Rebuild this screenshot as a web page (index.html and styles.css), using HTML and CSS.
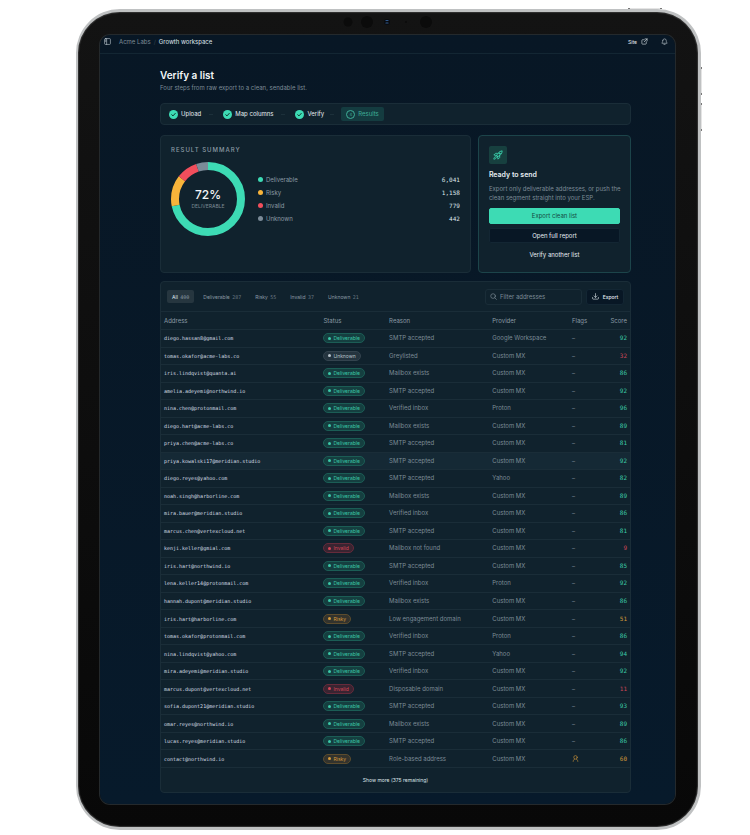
FILE: index.html
```html
<!DOCTYPE html>
<html lang="en">
<head>
    <meta charset="UTF-8">
    <meta name="viewport" content="width=device-width, initial-scale=1.0">
    <title>Verify a list</title>
    <link rel="stylesheet" href="styles.css">
</head>
<body>
    <div class="device">
        <span class="side-button power"></span>
        <span class="side-button volume-up"></span>
        <span class="side-button volume-down"></span>
        <div class="camera-bar">
            <svg width="92" height="14" viewBox="0 0 92 14">
                <circle cx="5" cy="7" r="4.5" fill="#0b0b0b"/>
                <circle cx="24" cy="7" r="6" fill="#0b0b0b"/>
                <circle cx="44" cy="7" r="3" fill="#090c10"/>
                <path d="M43 5.5h2M43 8h2" stroke="#31588c" stroke-width="1.2"/>
                <circle cx="63" cy="7" r="1" fill="#0b0b0b"/>
                <circle cx="83" cy="7" r="6" fill="#0b0b0b"/>
            </svg>
        </div>

        <div class="screen">
            <header class="topbar">
                <button class="icon-button" aria-label="Toggle sidebar">
                    <svg width="7" height="7" viewBox="0 0 24 24"><rect x="2" y="2" width="20" height="20" rx="3"/><path d="M9 2v20M4 7h3M4 11h3"/></svg>
                </button>
                <nav class="breadcrumb">
                    <a href="#">Acme Labs</a>
                    <span class="slash">/</span>
                    <a href="#" class="current">Growth workspace</a>
                </nav>
                <a href="#" class="site-link">Site
                    <svg width="7" height="7" viewBox="0 0 24 24"><path d="M14 3h7v7M21 3L11 13M18 13v6a2 2 0 0 1-2 2H5a2 2 0 0 1-2-2V8a2 2 0 0 1 2-2h6"/></svg>
                </a>
                <button class="icon-button" aria-label="Notifications">
                    <svg width="7" height="7" viewBox="0 0 24 24"><path d="M6 9a6 6 0 0 1 12 0c0 6 3 7 3 9H3c0-2 3-3 3-9M10 22h4"/></svg>
                </button>
            </header>

            <main class="page">
                <h1>Verify a list</h1>
                <p class="subtitle">Four steps from raw export to a clean, sendable list.</p>

                <ol class="steps">
                    <li><svg width="9" height="9" viewBox="0 0 18 18"><circle cx="9" cy="9" r="9"/><path d="M5.5 9.5l2.5 2.3 4.5-5"/></svg>Upload</li>
                    <li><svg width="9" height="9" viewBox="0 0 18 18"><circle cx="9" cy="9" r="9"/><path d="M5.5 9.5l2.5 2.3 4.5-5"/></svg>Map columns</li>
                    <li><svg width="9" height="9" viewBox="0 0 18 18"><circle cx="9" cy="9" r="9"/><path d="M5.5 9.5l2.5 2.3 4.5-5"/></svg>Verify</li>
                    <li class="active"><span class="step-number">4</span>Results</li>
                </ol>

                <div class="overview">
                    <section class="card summary">
                        <h2>RESULT SUMMARY</h2>
                        <div class="summary-body">
                            <div class="donut">
                                <svg viewBox="0 0 74 74">
                                    <g transform="rotate(-90 37 37)">
                                        <circle cx="37" cy="37" r="33" pathLength="100" stroke="#3ddbb4" stroke-dasharray="71.8 28.2"/>
                                        <circle cx="37" cy="37" r="33" pathLength="100" stroke="#f8b43a" stroke-dasharray="13.7 86.3" stroke-dashoffset="-71.8"/>
                                        <circle cx="37" cy="37" r="33" pathLength="100" stroke="#f14e5c" stroke-dasharray="9.3 90.7" stroke-dashoffset="-85.5"/>
                                        <circle cx="37" cy="37" r="33" pathLength="100" stroke="#7b8b98" stroke-dasharray="5.2 94.8" stroke-dashoffset="-94.8"/>
                                    </g>
                                </svg>
                                <div class="donut-label"><strong>72%</strong><span>DELIVERABLE</span></div>
                            </div>
                            <dl class="legend">
                                <div><dt class="deliverable">Deliverable</dt><dd>6,041</dd></div>
                                <div><dt class="risky">Risky</dt><dd>1,158</dd></div>
                                <div><dt class="invalid">Invalid</dt><dd>779</dd></div>
                                <div><dt class="unknown">Unknown</dt><dd>442</dd></div>
                            </dl>
                        </div>
                    </section>

                    <section class="card ready">
                        <span class="rocket">
                            <svg width="10" height="10" viewBox="0 0 24 24"><path d="M9 14c1-5 5-11 13-12 0 7-5 12-11 14zM9 14l2 2M10 8H6l-4 4 6 1M16 13v5l-4 4-1-6M6 16c-3 1-4 3-4 6 3 0 5-1 6-4"/><circle cx="15.500" cy="8.500" r="1.500"/></svg>
                        </span>
                        <h3>Ready to send</h3>
                        <p>Export only deliverable addresses, or push the clean segment straight into your ESP.</p>
                        <button class="button primary">Export clean list</button>
                        <button class="button">Open full report</button>
                        <button class="button ghost">Verify another list</button>
                    </section>
                </div>

                <section class="card results">
                    <div class="toolbar">
                        <button class="tab selected">All <span>400</span></button>
                        <button class="tab">Deliverable <span>287</span></button>
                        <button class="tab">Risky <span>55</span></button>
                        <button class="tab">Invalid <span>37</span></button>
                        <button class="tab">Unknown <span>21</span></button>
                        <label class="search">
                            <svg width="7" height="7" viewBox="0 0 24 24"><circle cx="10.500" cy="10.500" r="8"/><path d="M16.500 16.500L22 22"/></svg>
                            <input type="text" placeholder="Filter addresses" aria-label="Filter addresses">
                        </label>
                        <button class="export">
                            <svg width="7" height="7" viewBox="0 0 24 24"><path d="M12 2v13M7 10l5 5 5-5M2 15v4a2 2 0 0 0 2 2h16a2 2 0 0 0 2-2v-4"/></svg>Export
                        </button>
                    </div>
                    <table>
                        <thead>
                            <tr><th class="col-address">Address</th><th class="col-status">Status</th><th class="col-reason">Reason</th><th class="col-provider">Provider</th><th class="col-flags">Flags</th><th class="col-score">Score</th></tr>
                        </thead>
                        <tbody id="result-rows"></tbody>
                    </table>
                    <button class="show-more">Show more (375 remaining)</button>
                </section>
            </main>
        </div>
    </div>
    <script src="script.js"></script>
</body>
</html>
```
FILE: styles.css
```css
* {
    box-sizing: border-box;
}
body {
    margin: 0;
    padding: 9px 49px 5px 76px;
    min-height: 100vh;
    display: flex;
    background: #fff;
    color: #e6edf2;
    font-family: Inter, sans-serif;
    font-size: 6px;
    line-height: 8px;
}
h1, h2, h3, p, ol, dl, dd {
    margin: 0;
    padding: 0;
}
button, input {
    font: inherit;
    color: inherit;
    background: none;
    border: 0;
    padding: 0;
}
button {
    cursor: pointer;
}
a {
    color: inherit;
    text-decoration: none;
}
svg {
    fill: none;
    stroke: currentColor;
    stroke-width: 2;
    stroke-linecap: round;
    stroke-linejoin: round;
    flex-shrink: 0;
}

/* Tablet frame */
.device {
    position: relative;
    flex: 1;
    display: flex;
    flex-direction: column;
    padding: 0 23px 23px 22px;
    border: 3px solid #bfc1c2;
    border-left-width: 2px;
    border-radius: 44px;
    background: linear-gradient(#131313, #080808);
    box-shadow: inset 0 0 1px 1px #333;
}
.camera-bar {
    height: 23px;
    padding: 3px 0 0 2px;
}
.camera-bar svg {
    stroke: none;
    display: block;
    margin: 0 auto;
}
.side-button {
    position: absolute;
    border: 0 solid #777;
    background: #e4e4e4;
}
.power {
    top: -4px;
    right: 36px;
    width: 34px;
    height: 1px;
    border-width: 0 2px;
}
.volume-up, .volume-down {
    right: -4px;
    width: 1px;
    height: 28px;
    border-width: 2px 0;
}
.volume-up {
    top: 55px;
}
.volume-down {
    top: 91px;
}
.screen {
    flex: 1;
    display: flex;
    flex-direction: column;
    border-radius: 10px;
    overflow: hidden;
    background: linear-gradient(#081725, #071a2b);
    box-shadow: 0 0 0 1px #24292c;
}

.topbar {
    display: flex;
    align-items: center;
    height: 19px;
    padding: 0 7px 5px 4px;
    border-bottom: 1px solid #132633;
}
.icon-button {
    display: flex;
    color: #c6d0d8;
}
.breadcrumb {
    display: flex;
    gap: 3px;
    margin-left: 8px;
    color: #7c8b96;
}
.slash {
    color: #33444f;
}
.current {
    color: #dfe6eb;
}
.site-link {
    display: flex;
    align-items: center;
    gap: 4px;
    margin-left: auto;
    margin-right: 13px;
    font-size: 5px;
}

.page {
    flex: 1;
    display: flex;
    flex-direction: column;
    padding: 14px 44px 11px 60px;
}
h1 {
    font-size: 10px;
    line-height: 14px;
    font-weight: 600;
    color: #f3f6f8;
}
.subtitle {
    margin: 2px 0 11px;
    color: #7c8b96;
}

.card, .steps {
    border: 1px solid #1a2d38;
    border-radius: 4px;
    background: #10222d;
}
.steps {
    display: flex;
    align-items: center;
    height: 22px;
    padding: 0 8px;
    list-style: none;
}
.steps li {
    display: flex;
    align-items: center;
    gap: 3px;
}
.steps li + li::before {
    content: "";
    width: 4px;
    height: 1px;
    margin: 0 7px 0 8px;
    background: #1c303a;
}
.steps circle {
    fill: #3ddbb4;
    stroke: none;
}
.steps path {
    stroke: #10382f;
}
.steps .active {
    position: relative;
    height: 14px;
    margin-left: 17px;
    padding: 0 5px;
    border-radius: 2px;
    background: #143c40;
    color: #3fae98;
}
.steps .active::before {
    position: absolute;
    right: 100%;
}
.step-number {
    width: 9px;
    height: 9px;
    border: 1px solid #3fae98;
    border-radius: 50%;
    font-size: 4px;
    line-height: 7px;
    text-align: center;
}

.overview {
    display: grid;
    grid-template-columns: 67fr 33fr;
    gap: 7px;
    margin: 10px 0 8px;
}
.summary {
    padding: 10px;
}
h2 {
    color: #8b9aa4;
    font-size: 6px;
    font-weight: 500;
    letter-spacing: 1px;
}
.summary-body {
    display: flex;
    align-items: center;
    gap: 13px;
    margin-top: 8px;
}
.donut {
    position: relative;
    width: 74px;
    height: 74px;
}
.donut svg {
    display: block;
    stroke-width: 8;
    stroke-linecap: butt;
}
.donut-label {
    position: absolute;
    inset: 0;
    display: flex;
    flex-direction: column;
    align-items: center;
    justify-content: center;
    color: #7c8b96;
    font-size: 5px;
}
.donut-label strong {
    color: #f3f6f8;
    font-size: 12px;
    line-height: 14px;
    font-weight: 500;
}
.legend {
    flex: 1;
    display: grid;
    gap: 5px;
    color: #8b9aa4;
}
.legend div {
    display: flex;
    justify-content: space-between;
}
.legend dt::before {
    content: "";
    display: inline-block;
    width: 5px;
    height: 5px;
    margin-right: 3px;
    border-radius: 50%;
    background: currentColor;
}
.legend .deliverable::before {
    background: #3ddbb4;
}
.legend .risky::before {
    background: #f8b43a;
}
.legend .invalid::before {
    background: #f14e5c;
}
.legend .unknown::before {
    background: #7b8b98;
}
.legend dd {
    color: #dfe6eb;
    font-family: "DejaVu Sans Mono", monospace;
}

.ready {
    display: flex;
    flex-direction: column;
    padding: 10px;
    border-color: #1c444a;
}
.rocket {
    display: flex;
    align-items: center;
    justify-content: center;
    width: 18px;
    height: 18px;
    border-radius: 2px;
    background: #17403f;
    color: #3ddbb4;
}
h3 {
    margin: 7px 0 5px;
    font-size: 7px;
    font-weight: 600;
}
.ready p {
    margin: 0 -9px 6px 0;
    color: #7c8b96;
    line-height: 9px;
}
.button {
    height: 15px;
    margin-bottom: 4px;
    border: 1px solid #132633;
    border-radius: 2px;
    background: #081725;
}
.button.primary {
    height: 16px;
    border-color: #3ddbb4;
    background: #3ddbb4;
    color: #14493f;
}
.button.ghost {
    margin: 0;
    border: 0;
    background: none;
}

.results {
    flex: 1;
    display: flex;
    flex-direction: column;
}
.toolbar {
    display: flex;
    align-items: center;
    height: 29px;
    padding: 0 6px;
}
.tab {
    height: 13px;
    margin-right: 4px;
    padding: 0 5px;
    border-radius: 2px;
    color: #8b9aa4;
    font-size: 5px;
}
.tab span {
    margin-left: 1px;
    color: #6a7984;
    font-family: "DejaVu Sans Mono", monospace;
}
.tab.selected {
    background: #26363f;
    color: #dfe6eb;
}
.tab.selected span {
    color: #8b9aa4;
}
.search {
    display: flex;
    align-items: center;
    gap: 3px;
    width: 97px;
    height: 16px;
    margin-left: auto;
    margin-right: 4px;
    padding: 0 4px;
    border: 1px solid #1a2d38;
    border-radius: 3px;
    color: #8b9aa4;
}
.search input {
    min-width: 0;
    flex: 1;
}
.search input::placeholder {
    color: #7c8b96;
}
.export {
    display: flex;
    align-items: center;
    justify-content: center;
    gap: 4px;
    width: 38px;
    height: 16px;
    border: 1px solid #132633;
    border-radius: 3px;
    background: #081725;
    font-size: 5px;
    font-weight: 500;
}

table {
    flex: 1;
    width: 100%;
    table-layout: fixed;
    border-collapse: separate;
    border-spacing: 0;
    color: #7c8b96;
}
thead tr {
    height: 18px;
}
th, td {
    padding: 0 3px;
    border-top: 1px solid #1a2d38;
    text-align: left;
    white-space: nowrap;
}
th {
    color: #8b9aa4;
    font-weight: 400;
}
tbody tr:nth-child(8) {
    background: #152935;
}
.col-address {
    width: 34%;
}
.col-status {
    width: 14%;
}
.col-reason {
    width: 22%;
}
.col-provider {
    width: 17%;
}
.col-flags {
    width: 7%;
}
.col-score, .score {
    text-align: right;
}
.address {
    color: #d6dee4;
    font-family: "DejaVu Sans Mono", monospace;
    font-size: 5px;
}
.score {
    font-family: "DejaVu Sans Mono", monospace;
    color: #3cc9a8;
}
.score.invalid, .score.unknown {
    color: #cc4658;
}
.score.risky, .flag-icon {
    color: #d49a3a;
}
.flag-icon {
    display: block;
}
.badge {
    display: flex;
    align-items: center;
    gap: 2px;
    width: fit-content;
    height: 10px;
    padding: 0 4px;
    border: 1px solid #1b5d55;
    border-radius: 5px;
    background: #153f40;
    color: #3cc9a8;
    font-size: 5px;
}
.badge::before {
    content: "";
    width: 3px;
    height: 3px;
    border-radius: 50%;
    background: currentColor;
}
.badge.risky {
    border-color: #5c4c2d;
    background: #33332d;
    color: #d49a3a;
}
.badge.invalid {
    border-color: #652b3b;
    background: #3a2431;
    color: #d54657;
}
.badge.unknown {
    border-color: #33434e;
    background: #24343f;
    color: #b8c3cb;
}
.show-more {
    height: 25px;
    border-top: 1px solid #1a2d38;
    color: #dfe6eb;
    font-size: 5px;
}
```
FILE: script.js
```js
const results = [
    ['diego.hassan8@gmail.com', 'Deliverable', 'SMTP accepted', 'Google Workspace', 92],
    ['tomas.okafor@acme-labs.co', 'Unknown', 'Greylisted', 'Custom MX', 32],
    ['iris.lindqvist@quanta.ai', 'Deliverable', 'Mailbox exists', 'Custom MX', 86],
    ['amelia.adeyemi@northwind.io', 'Deliverable', 'SMTP accepted', 'Custom MX', 92],
    ['nina.chen@protonmail.com', 'Deliverable', 'Verified inbox', 'Proton', 96],
    ['diego.hart@acme-labs.co', 'Deliverable', 'Mailbox exists', 'Custom MX', 89],
    ['priya.chen@acme-labs.co', 'Deliverable', 'SMTP accepted', 'Custom MX', 81],
    ['priya.kowalski17@meridian.studio', 'Deliverable', 'SMTP accepted', 'Custom MX', 92],
    ['diego.reyes@yahoo.com', 'Deliverable', 'SMTP accepted', 'Yahoo', 82],
    ['noah.singh@harborline.com', 'Deliverable', 'Mailbox exists', 'Custom MX', 89],
    ['mira.bauer@meridian.studio', 'Deliverable', 'Verified inbox', 'Custom MX', 86],
    ['marcus.chen@vertexcloud.net', 'Deliverable', 'SMTP accepted', 'Custom MX', 81],
    ['kenji.keller@gmial.com', 'Invalid', 'Mailbox not found', 'Custom MX', 9],
    ['iris.hart@northwind.io', 'Deliverable', 'SMTP accepted', 'Custom MX', 85],
    ['lena.keller14@protonmail.com', 'Deliverable', 'Verified inbox', 'Proton', 92],
    ['hannah.dupont@meridian.studio', 'Deliverable', 'Mailbox exists', 'Custom MX', 86],
    ['iris.hart@harborline.com', 'Risky', 'Low engagement domain', 'Custom MX', 51],
    ['tomas.okafor@protonmail.com', 'Deliverable', 'Verified inbox', 'Proton', 86],
    ['nina.lindqvist@yahoo.com', 'Deliverable', 'SMTP accepted', 'Yahoo', 94],
    ['mira.adeyemi@meridian.studio', 'Deliverable', 'Verified inbox', 'Custom MX', 92],
    ['marcus.dupont@vertexcloud.net', 'Invalid', 'Disposable domain', 'Custom MX', 11],
    ['sofia.dupont21@meridian.studio', 'Deliverable', 'SMTP accepted', 'Custom MX', 93],
    ['omar.reyes@northwind.io', 'Deliverable', 'Mailbox exists', 'Custom MX', 89],
    ['lucas.reyes@meridian.studio', 'Deliverable', 'SMTP accepted', 'Custom MX', 86],
    ['contact@northwind.io', 'Risky', 'Role-based address', 'Custom MX', 60, true]
];

const roleIcon = '<svg class="flag-icon" width="7" height="7" viewBox="0 0 24 24"><circle cx="12" cy="8" r="6"/><path d="M4 22c0-4 2-7 5-8M20 22c0-4-2-7-5-8"/></svg>';

document.getElementById('result-rows').innerHTML = results.map(([address, status, reason, provider, score, role]) => `
    <tr>
        <td class="address">${address}</td>
        <td><span class="badge ${status.toLowerCase()}">${status}</span></td>
        <td>${reason}</td>
        <td>${provider}</td>
        <td>${role ? roleIcon : '–'}</td>
        <td class="score ${status.toLowerCase()}">${score}</td>
    </tr>
`).join('');
```
